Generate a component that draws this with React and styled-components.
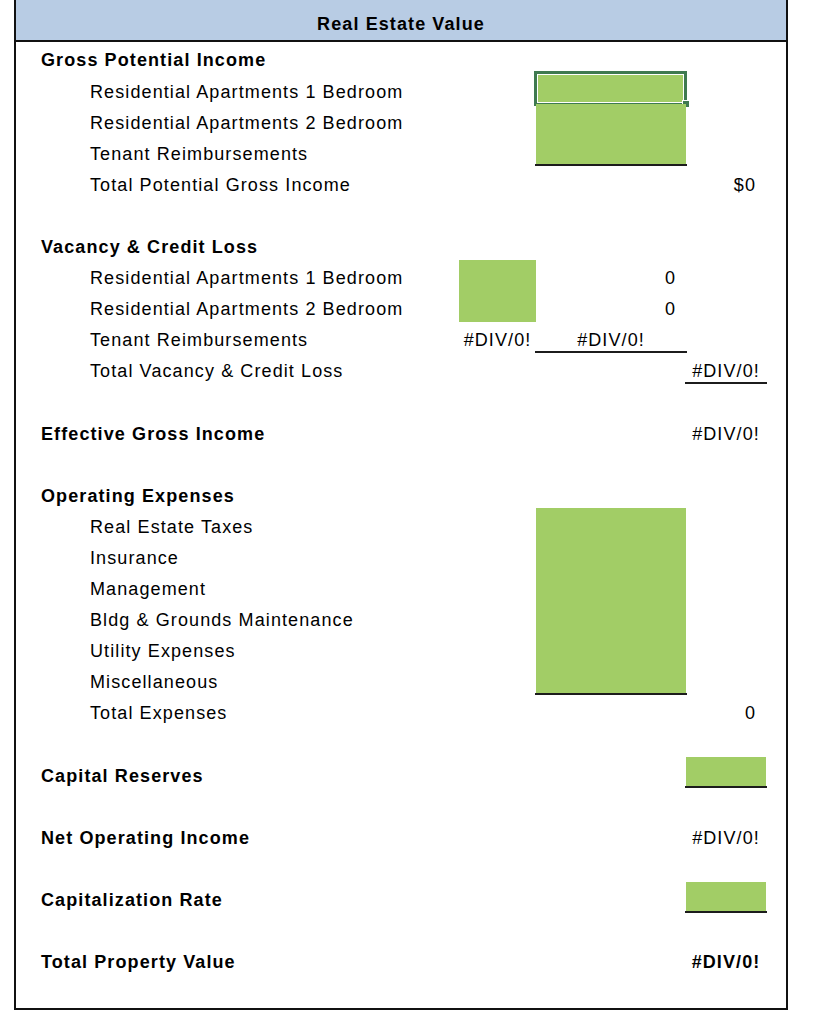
import React from 'react'
import styled, { createGlobalStyle } from 'styled-components'

const GlobalStyle = createGlobalStyle`
    body {
        margin: 0;
        background: #fff;
        color: #000;
        font-family: "Liberation Sans", Arial, sans-serif;
    }
`

const Sheet = styled.div`
    width: 770px;
    margin-left: 14px;
    padding-bottom: 2px;
    border: 2px solid #111;
    border-top: none;
    font-size: 18px;
    line-height: 1.15;
    letter-spacing: 1.1px;
`

const Header = styled.div`
    height: 42px;
    box-sizing: border-box;
    display: flex;
    align-items: flex-end;
    justify-content: center;
    padding-bottom: 5.5px;
    background: #b8cce4;
    border-bottom: 2px solid #111;
    font-weight: bold;
`

const Row = styled.div`
    display: grid;
    grid-template-columns: 443px 77px 150px 80px 20px;
    height: 31.1px;
`

const Label = styled.div`
    display: flex;
    align-items: flex-end;
    padding: 0 0 2px ${p => (p.$head ? '25px' : '74px')};
    font-weight: ${p => (p.$head ? 'bold' : 'normal')};
    white-space: nowrap;
`

const Cell = styled.div`
    position: relative;
    display: flex;
    align-items: flex-end;
    justify-content: ${p => (p.$align === 'right' ? 'flex-end' : 'center')};
    padding: 0 10px 2px;
    background: ${p => (p.$fill ? '#a2cd66' : 'transparent')};
    font-weight: ${p => (p.$bold ? 'bold' : 'normal')};
    white-space: nowrap;

    &::after {
        content: '';
        display: ${p => (p.$under ? 'block' : 'none')};
        position: absolute;
        left: -1px;
        right: -1px;
        bottom: 0;
        height: 2px;
        background: #1c1c1c;
    }
`

// active cell outline laid over the first input cell
const Selection = styled.div`
    position: absolute;
    top: -2px;
    left: -2px;
    right: -1px;
    bottom: -2px;
    border: 3px solid #3f7a50;
    box-shadow: inset 0 0 0 1px #fff;
`

const Handle = styled.div`
    position: absolute;
    right: -4px;
    bottom: -4px;
    width: 6px;
    height: 6px;
    background: #3f7a50;
    border: 1px solid #fff;
`

const item = (label, cols = {}) => ({ label, ...cols })
const head = (label, cols = {}) => ({ label, head: true, ...cols })
const blank = {}

const rows = [
    head('Gross Potential Income'),
    item('Residential Apartments 1 Bedroom', { b: { fill: true, selected: true } }),
    item('Residential Apartments 2 Bedroom', { b: { fill: true } }),
    item('Tenant Reimbursements', { b: { fill: true, under: true } }),
    item('Total Potential Gross Income', { c: { text: '$0', align: 'right' } }),
    blank,
    head('Vacancy & Credit Loss'),
    item('Residential Apartments 1 Bedroom', { a: { fill: true }, b: { text: '0', align: 'right' } }),
    item('Residential Apartments 2 Bedroom', { a: { fill: true }, b: { text: '0', align: 'right' } }),
    item('Tenant Reimbursements', { a: { text: '#DIV/0!' }, b: { text: '#DIV/0!', under: true } }),
    item('Total Vacancy & Credit Loss', { c: { text: '#DIV/0!', under: true } }),
    blank,
    head('Effective Gross Income', { c: { text: '#DIV/0!' } }),
    blank,
    head('Operating Expenses'),
    item('Real Estate Taxes', { b: { fill: true } }),
    item('Insurance', { b: { fill: true } }),
    item('Management', { b: { fill: true } }),
    item('Bldg & Grounds Maintenance', { b: { fill: true } }),
    item('Utility Expenses', { b: { fill: true } }),
    item('Miscellaneous', { b: { fill: true, under: true } }),
    item('Total Expenses', { c: { text: '0', align: 'right' } }),
    blank,
    head('Capital Reserves', { c: { fill: true, under: true } }),
    blank,
    head('Net Operating Income', { c: { text: '#DIV/0!' } }),
    blank,
    head('Capitalization Rate', { c: { fill: true, under: true } }),
    blank,
    head('Total Property Value', { c: { text: '#DIV/0!', bold: true } }),
    blank,
]

const ValueCell = ({ cell = {} }) => (
    <Cell $fill={cell.fill} $under={cell.under} $align={cell.align} $bold={cell.bold}>
        {cell.text}
        {cell.selected && <>
            <Selection />
            <Handle />
        </>}
    </Cell>
)

const App = () => {
    return (
        <>
            <GlobalStyle />
            <Sheet>
                <Header>Real Estate Value</Header>
                {rows.map((row, i) => (
                    <Row key={i}>
                        <Label $head={row.head}>{row.label}</Label>
                        <ValueCell cell={row.a} />
                        <ValueCell cell={row.b} />
                        <ValueCell cell={row.c} />
                        <div />
                    </Row>
                ))}
            </Sheet>
        </>
    )
}

export default App
